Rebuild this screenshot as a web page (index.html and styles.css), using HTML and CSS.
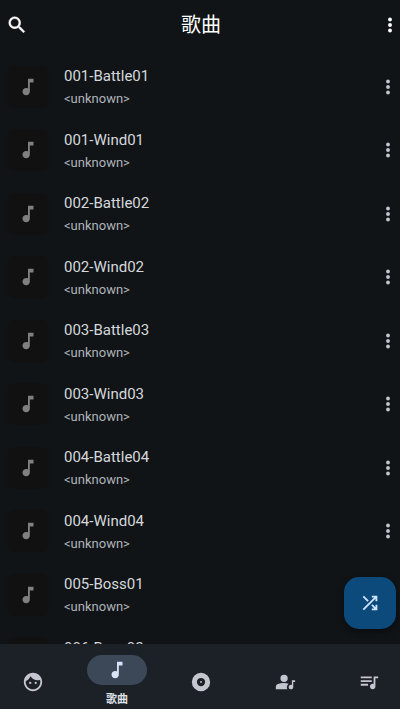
FILE: index.html
```html
<!DOCTYPE html>
<html lang="zh-CN">
<head>
<meta charset="utf-8">
<meta name="viewport" content="width=device-width, initial-scale=1">
<title>歌曲</title>
<link rel="stylesheet" href="styles.css">
</head>
<body>
<svg class="sprite" aria-hidden="true">
  <symbol id="note" viewBox="0 0 24 24"><path d="M10 21q-1.65 0-2.825-1.175T6 17t1.175-2.825T10 13q.575 0 1.063.137.487.138.937.413V3h6v4h-4v10q0 1.65-1.175 2.825T10 21z"/></symbol>
  <symbol id="more" viewBox="8 0 8 24"><circle cx="12" cy="6" r="2.1"/><circle cx="12" cy="12" r="2.1"/><circle cx="12" cy="18" r="2.1"/></symbol>
</svg>
<div class="app">
  <header class="bar">
    <button class="icon-button" aria-label="搜索"><svg class="icon" viewBox="0 0 24 24"><path stroke="currentColor" stroke-width=".5" d="M15.5 14h-.79l-.28-.27A6.47 6.47 0 0 0 16 9.500 6.500 6.500 0 1 0 9.500 16c1.610 0 3.090-.59 4.230-1.570l.27.28v.79l5 4.990L20.490 19l-4.990-5zm-6 0a4.500 4.500 0 1 1 0-9 4.500 4.500 0 0 1 0 9z"/></svg></button>
    <h1 class="title">歌曲</h1>
    <button class="icon-button" aria-label="更多选项"><svg class="icon more"><use href="#more"/></svg></button>
  </header>
  <main class="content">
    <ul class="songs">
      <li class="song"><span class="cover"><svg class="icon"><use href="#note"/></svg></span><div class="text"><p class="name">001-Battle01</p><p class="artist">&lt;unknown&gt;</p></div><button class="icon-button" aria-label="更多"><svg class="icon more"><use href="#more"/></svg></button></li>
      <li class="song"><span class="cover"><svg class="icon"><use href="#note"/></svg></span><div class="text"><p class="name">001-Wind01</p><p class="artist">&lt;unknown&gt;</p></div><button class="icon-button" aria-label="更多"><svg class="icon more"><use href="#more"/></svg></button></li>
      <li class="song"><span class="cover"><svg class="icon"><use href="#note"/></svg></span><div class="text"><p class="name">002-Battle02</p><p class="artist">&lt;unknown&gt;</p></div><button class="icon-button" aria-label="更多"><svg class="icon more"><use href="#more"/></svg></button></li>
      <li class="song"><span class="cover"><svg class="icon"><use href="#note"/></svg></span><div class="text"><p class="name">002-Wind02</p><p class="artist">&lt;unknown&gt;</p></div><button class="icon-button" aria-label="更多"><svg class="icon more"><use href="#more"/></svg></button></li>
      <li class="song"><span class="cover"><svg class="icon"><use href="#note"/></svg></span><div class="text"><p class="name">003-Battle03</p><p class="artist">&lt;unknown&gt;</p></div><button class="icon-button" aria-label="更多"><svg class="icon more"><use href="#more"/></svg></button></li>
      <li class="song"><span class="cover"><svg class="icon"><use href="#note"/></svg></span><div class="text"><p class="name">003-Wind03</p><p class="artist">&lt;unknown&gt;</p></div><button class="icon-button" aria-label="更多"><svg class="icon more"><use href="#more"/></svg></button></li>
      <li class="song"><span class="cover"><svg class="icon"><use href="#note"/></svg></span><div class="text"><p class="name">004-Battle04</p><p class="artist">&lt;unknown&gt;</p></div><button class="icon-button" aria-label="更多"><svg class="icon more"><use href="#more"/></svg></button></li>
      <li class="song"><span class="cover"><svg class="icon"><use href="#note"/></svg></span><div class="text"><p class="name">004-Wind04</p><p class="artist">&lt;unknown&gt;</p></div><button class="icon-button" aria-label="更多"><svg class="icon more"><use href="#more"/></svg></button></li>
      <li class="song"><span class="cover"><svg class="icon"><use href="#note"/></svg></span><div class="text"><p class="name">005-Boss01</p><p class="artist">&lt;unknown&gt;</p></div><button class="icon-button" aria-label="更多"><svg class="icon more"><use href="#more"/></svg></button></li>
      <li class="song"><span class="cover"><svg class="icon"><use href="#note"/></svg></span><div class="text"><p class="name">006-Boss02</p><p class="artist">&lt;unknown&gt;</p></div><button class="icon-button" aria-label="更多"><svg class="icon more"><use href="#more"/></svg></button></li>
    </ul>
    <button class="shuffle" aria-label="随机播放"><svg class="icon" viewBox="0 0 24 24"><path d="M14 20v-2h2.600l-3.200-3.200 1.425-1.425L18 16.550V14h2v6zm-8.600 0L4 18.600 16.600 6H14V4h6v6h-2V7.400zm3.775-9.425L4 5.400 5.400 4l5.175 5.175z"/></svg></button>
  </main>
  <nav class="tabs">
    <a class="tab" href="#for-you" aria-label="推荐"><svg class="icon" viewBox="0 0 24 24"><path d="M9 11.750a1.250 1.250 0 1 0 0 2.500 1.250 1.250 0 0 0 0-2.500zm6 0a1.250 1.250 0 1 0 0 2.500 1.250 1.250 0 0 0 0-2.500zM12 2C6.480 2 2 6.480 2 12s4.480 10 10 10 10-4.480 10-10S17.520 2 12 2zm0 18c-4.410 0-8-3.590-8-8 0-.29.02-.58.050-.86 2.360-1.050 4.230-2.980 5.210-5.370a9.974 9.974 0 0 0 10.410 3.970c.21.71.33 1.470.33 2.260 0 4.410-3.590 8-8 8z"/></svg></a>
    <a class="tab" href="#songs" aria-current="page"><span class="pill"><svg class="icon"><use href="#note"/></svg></span><span class="label">歌曲</span></a>
    <a class="tab" href="#albums" aria-label="专辑"><svg class="icon" viewBox="0 0 24 24"><path d="M12 2a10 10 0 1 0 0 20 10 10 0 0 0 0-20zm0 14.500a4.500 4.500 0 1 1 0-9 4.500 4.500 0 0 1 0 9zm0-5.500a1 1 0 1 0 0 2 1 1 0 0 0 0-2z"/></svg></a>
    <a class="tab" href="#artists" aria-label="艺术家"><svg class="icon" viewBox="0 0 24 24"><path d="M11 12a4 4 0 1 1 0-8 4 4 0 0 1 0 8zM2 20v-2.800q0-.85.425-1.563T3.600 14.550q1.500-.75 3.400-1.150T11 13q1.250 0 2.500.25t2.500.65q-.9.600-1.400 1.550T14 17.500q0 .65.150 1.275T14.600 20zm16.500 0q-1.050 0-1.775-.725T16 17.500t.725-1.775T18.500 15q.2 0 .45.050t.55.150V10H23v2h-2v5.500q0 1.050-.725 1.775T18.500 20z"/></svg></a>
    <a class="tab" href="#playlists" aria-label="播放列表"><svg class="icon" viewBox="0 0 24 24"><path d="M15 6H3v2h12V6zm0 4H3v2h12v-2zM3 16h8v-2H3v2zM17 6v8.180c-.31-.11-.65-.18-1-.18-1.660 0-3 1.340-3 3s1.340 3 3 3 3-1.340 3-3V8h3V6h-5z"/></svg></a>
  </nav>
</div>
</body>
</html>
```

FILE: styles.css
```css
* {
  box-sizing: border-box;
  margin: 0;
  padding: 0;
}

body {
  background: #101417;
  color: #d6d8dc;
  font-family: Roboto, "Noto Sans CJK SC", sans-serif;
}

.sprite {
  position: absolute;
  width: 0;
  height: 0;
}

.app {
  display: flex;
  flex-direction: column;
  height: 100vh;
}

.icon {
  display: block;
  flex: none;
  width: 22px;
  height: 22px;
  fill: currentColor;
}

.more {
  width: 20px;
}

.icon-button {
  flex: none;
  border: 0;
  background: none;
  color: inherit;
}

.bar {
  display: flex;
  align-items: center;
  flex: none;
  height: 49px;
  padding-left: 6px;
  color: #fff;
}

.title {
  flex: 1;
  padding-right: 6px;
  font-size: 20px;
  font-weight: 400;
  line-height: 28px;
  text-align: center;
}

.content {
  position: relative;
  flex: 1;
  min-height: 0;
  padding-top: 6px;
  overflow: hidden;
}

.songs {
  list-style: none;
}

.song {
  display: flex;
  align-items: center;
  gap: 15px;
  height: 63px;
  padding: 0 2px 0 7px;
}

.song:nth-child(even) {
  height: 64px;
}

.song .icon-button {
  color: #c3c6cf;
}

.cover {
  display: grid;
  place-items: center;
  width: 42px;
  height: 42px;
  border-radius: 8px;
  background: #111;
  color: #808080;
}

.text {
  flex: 1;
  min-width: 0;
}

.name {
  font-size: 15px;
  line-height: 24px;
}

.artist {
  margin-top: 1px;
  color: #b0b3b9;
  font-size: 13px;
  line-height: 20px;
}

.shuffle {
  position: absolute;
  right: 4px;
  bottom: 15px;
  display: grid;
  place-items: center;
  width: 52px;
  height: 52px;
  border: 0;
  border-radius: 15px;
  background: #0d4a7c;
  color: #d0e4ff;
  box-shadow: 0 3px 6px rgba(0, 0, 0, 0.4);
}

.tabs {
  display: flex;
  justify-content: space-between;
  flex: none;
  height: 65px;
  padding-left: 2px;
  background: #1c2027;
}

.tab {
  display: flex;
  flex-direction: column;
  align-items: center;
  width: 62px;
  padding-top: 11px;
  color: #c3c6cf;
  text-decoration: none;
}

.tab > .icon {
  margin-top: 16px;
}

.pill {
  display: grid;
  place-items: center;
  width: 60px;
  height: 30px;
  border-radius: 15px;
  background: #3c4858;
  color: #d7e3f8;
}

.label {
  margin-top: 7px;
  color: #dfe2e9;
  font-size: 11px;
  font-weight: 700;
  line-height: 16px;
}
```
